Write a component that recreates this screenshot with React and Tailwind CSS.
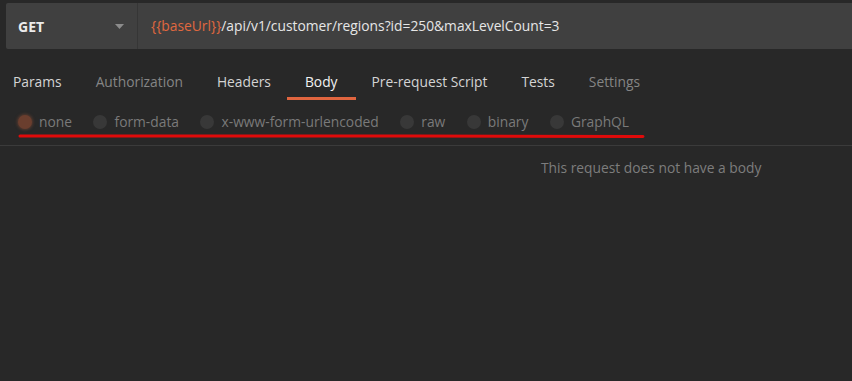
const tabs = [
  { label: 'Params', tone: 'text-[#d4d4d4]' },
  { label: 'Authorization', tone: 'text-[#858585]' },
  { label: 'Headers', tone: 'text-[#d4d4d4]' },
  { label: 'Body', tone: 'text-[#f2f2f2]', active: true },
  { label: 'Pre-request Script', tone: 'text-[#d4d4d4]' },
  { label: 'Tests', tone: 'text-[#d4d4d4]' },
  { label: 'Settings', tone: 'text-[#858585]' },
];

const bodyTypes = ['none', 'form-data', 'x-www-form-urlencoded', 'raw', 'binary', 'GraphQL'];

export default function App() {
  return (
    <div className="w-[852px] h-[381px] bg-[#282828] overflow-hidden" style={{ fontFamily: '"Open Sans", "Noto Sans", sans-serif' }}>
      {/* URL bar */}
      <div className="pt-[3px] pl-[6px]">
        <div className="flex h-[46px] bg-[#404040] rounded-l-[2px]">
          <div className="w-[132px] flex items-center justify-between pl-[12px] pr-[13px] border-r border-[#363636]">
            <span className="text-[14px] font-bold text-[#ececec]">GET</span>
            <svg width="9" height="5" viewBox="0 0 9 5"><path d="M0 0h9L4.5 5z" fill="#8c8c8c" /></svg>
          </div>
          <div className="flex items-center pl-[13px] text-[13.8px] text-[#e6e6e6]">
            <span className="text-[#e0683f]">{'{{baseUrl}}'}</span>
            <span>/api/v1/customer/regions?id=250&amp;maxLevelCount=3</span>
          </div>
        </div>
      </div>

      {/* Tabs */}
      <div className="flex pl-[13px] pt-[23px] gap-[34px] text-[13.8px]">
        {tabs.map((t) => (
          <div key={t.label} className="relative pb-[7px]">
            <span className={t.tone}>{t.label}</span>
            {t.active && <div className="absolute left-[-18px] right-[-18px] bottom-0 h-[3px] bg-[#e0653f]" />}
          </div>
        ))}
      </div>

      {/* Body types */}
      <div className="relative h-[46px] border-b border-[#3b3b3b]">
        <div className="flex items-center pl-[18px] pt-[12px] gap-[21.5px] text-[13.8px] text-[#7a7a7a]">
          {bodyTypes.map((b, i) => (
            <div key={b} className="flex items-center gap-[7px]">
              {i === 0 ? (
                <span className="w-[14px] h-[14px] rounded-full bg-[#6a3e2e] shadow-[0_0_3px_1px_rgba(120,70,50,0.6)]" />
              ) : (
                <span className="w-[14px] h-[14px] rounded-full bg-[#383838]" />
              )}
              <span>{b}</span>
            </div>
          ))}
        </div>
        <svg className="absolute left-[18px] top-[33px]" width="628" height="6" viewBox="0 0 628 6">
          <path d="M2 3 Q200 2.2 400 3 T625 3.6" stroke="#e00a0a" strokeWidth="3" strokeLinecap="round" fill="none" />
        </svg>
      </div>

      <div className="pt-[12px] pl-[541px] text-[13.8px] text-[#7d7d7d]">This request does not have a body</div>
    </div>
  );
}
